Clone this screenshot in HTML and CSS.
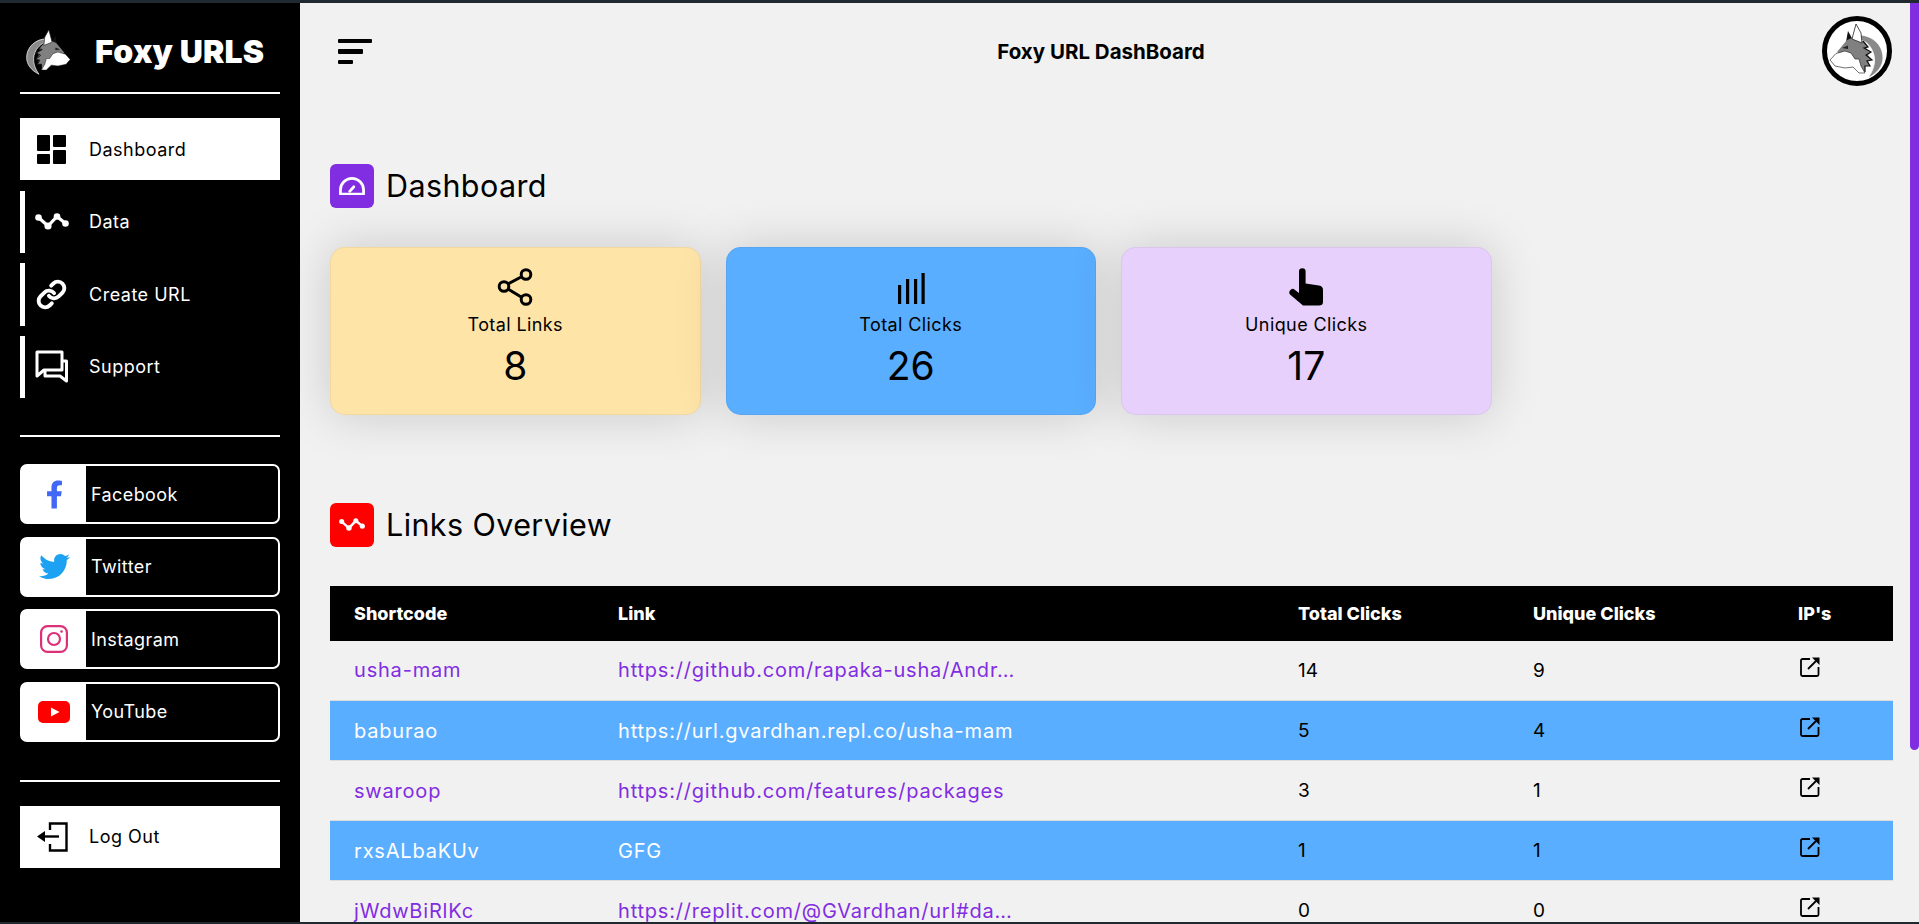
FILE: index.html
```html
<!DOCTYPE html>
<html lang="en">
<head>
    <meta charset="UTF-8">
    <meta name="viewport" content="width=device-width, initial-scale=1.0">
    <title>Foxy URL DashBoard</title>
    <link rel="stylesheet" href="styles.css">
</head>
<body>
    <!-- shared wolf head, faces left -->
    <svg class="defs">
        <symbol id="wolf" viewBox="8 7 56 56">
            <path d="M38 19C50 19 62 28 62 42C62 50 56 58 47 62C54 52 56 42 50 32C46 26 42 24 38 24Z" fill="#8a8a8a" stroke="#fff" stroke-width=".8"/>
            <path d="M27 15L32 24L25 26Z" fill="#111"/>
            <path d="M16 36L26 24L31 22L42 25L47 31L45 33L50 36L47 39L51 44L47 45L49 50L44 50L44 56L37 54L30 42L20 38Z" fill="#808080"/>
            <path d="M42 25L47 31L43 32L50 36L45 39L51 44L46 45L49 50L44 50L44 56" fill="none" stroke="#111" stroke-width="1.200"/>
            <path d="M35 8L31 23L41 27L40 17Z" fill="#fff" stroke="#222" stroke-width=".8"/>
            <path d="M9 44L15 37.500L24 35L30 37L34 43L38 43L40 50L44 57L38 57L32 51L24 52L14 50Z" fill="#fff" stroke="#111" stroke-width=".6"/>
            <path d="M21 32L27 29.500L27 33Z" fill="#222"/>
        </symbol>
        <symbol id="zigzag" viewBox="0 0 34 18">
            <path d="M3.500 4.500L13 13L22 3.500L30.500 10.500" fill="none" stroke="currentColor" stroke-width="3.200"/>
            <g fill="currentColor">
                <circle cx="3.500" cy="4.500" r="3.300"/><circle cx="13" cy="13" r="3.600"/><circle cx="22" cy="3.500" r="3.300"/><circle cx="30.500" cy="10.500" r="3.300"/>
            </g>
        </symbol>
        <symbol id="open" viewBox="0 0 20 20">
            <path d="M10 2H2.500A1.500 1.500 0 0 0 1 3.500V17.500A1.500 1.500 0 0 0 2.500 19H17A1.500 1.500 0 0 0 18.500 17.500V10" fill="none" stroke="currentColor" stroke-width="1.800"/>
            <path d="M8 12L16 4" fill="none" stroke="currentColor" stroke-width="1.800"/>
            <path d="M12 0.500H19.500V8Z" fill="currentColor"/>
        </symbol>
    </svg>

    <div class="window-edge"></div>
    <div class="app">
        <aside class="sidebar">
            <div class="brand">
                <svg class="brand-logo"><use href="#wolf"/></svg>
                <span class="brand-name">Foxy URLS</span>
            </div>
            <hr class="rule">

            <nav class="nav">
                <a class="nav-item active">
                    <span class="nav-icon">
                        <svg class="ico-dash" viewBox="0 0 29 29" fill="currentColor"><rect width="13" height="16" rx="1"/><rect y="19" width="13" height="10" rx="1"/><rect x="16" width="13" height="12" rx="1"/><rect x="16" y="15" width="13" height="14" rx="1"/></svg>
                    </span>
                    Dashboard
                </a>
                <a class="nav-item">
                    <span class="nav-icon"><svg class="ico-data"><use href="#zigzag"/></svg></span>
                    Data
                </a>
                <a class="nav-item">
                    <span class="nav-icon">
                        <svg class="ico-link" viewBox="0 0 24 24" fill="none" stroke="currentColor" stroke-width="3" stroke-linecap="round"><path d="M10 13a5 5 0 0 0 7.540.540l3-3a5 5 0 0 0-7.070-7.070l-1.720 1.710"/><path d="M14 11a5 5 0 0 0-7.540-.540l-3 3a5 5 0 0 0 7.070 7.070l1.710-1.710"/></svg>
                    </span>
                    Create URL
                </a>
                <a class="nav-item">
                    <span class="nav-icon">
                        <svg class="ico-chat" viewBox="0 0 33 33" fill="none" stroke="currentColor" stroke-width="3" stroke-linejoin="round"><path d="M2 2H27V20H9L2 26Z"/><path d="M27 11H31.500V31L25 26H10V20"/></svg>
                    </span>
                    Support
                </a>
            </nav>
            <hr class="rule rule-social">

            <div class="socials">
                <a class="social">
                    <span class="social-icon"><svg class="ico-fb" viewBox="22 0 276 512"><path fill="#4267f5" d="M279.140 288l14.220-92.660h-88.910v-60.130c0-25.350 12.420-50.060 52.240-50.060h40.420V6.260S260.430 0 225.360 0c-73.220 0-121.080 44.380-121.080 124.720v70.620H22.890V288h81.390v224h100.170V288z"/></svg></span>
                    Facebook
                </a>
                <a class="social">
                    <span class="social-icon"><svg class="ico-tw" viewBox="0 48 512 416"><path fill="#1da1f2" d="M459.370 151.716c.325 4.548.325 9.097.325 13.645 0 138.720-105.583 298.558-298.558 298.558-59.452 0-114.680-17.219-161.137-47.106 8.447.974 16.568 1.299 25.340 1.299 49.055 0 94.213-16.568 130.274-44.832-46.132-.975-84.792-31.188-98.112-72.772 6.498.974 12.995 1.624 19.818 1.624 9.421 0 18.843-1.300 27.614-3.573-48.081-9.747-84.143-51.980-84.143-102.985v-1.299c13.969 7.797 30.214 12.670 47.431 13.319-28.264-18.843-46.781-51.005-46.781-87.391 0-19.492 5.197-37.360 14.294-52.954 51.655 63.675 129.300 105.258 216.365 109.807-1.624-7.797-2.599-15.918-2.599-24.040 0-57.828 46.782-104.934 104.934-104.934 30.213 0 57.502 12.670 76.670 33.137 23.715-4.548 46.456-13.320 66.599-25.340-7.798 24.366-24.366 44.833-46.132 57.827 21.117-2.273 41.584-8.122 60.426-16.243-14.292 20.791-32.161 39.308-52.628 54.253z"/></svg></span>
                    Twitter
                </a>
                <a class="social">
                    <span class="social-icon"><svg class="ico-ig" viewBox="0 0 28 28" fill="none" stroke="#dc3078" stroke-width="2.200"><rect x="1.100" y="1.100" width="25.800" height="25.800" rx="6.500"/><circle cx="14" cy="14" r="6"/><circle cx="21.500" cy="6.500" r="1.300" fill="#dc3078" stroke="none"/></svg></span>
                    Instagram
                </a>
                <a class="social">
                    <span class="social-icon"><svg class="ico-yt" viewBox="0 0 32 22"><rect width="32" height="22" rx="5" fill="#f00"/><path d="M13 6.500L21.500 11L13 15.500Z" fill="#fff"/></svg></span>
                    YouTube
                </a>
            </div>
            <hr class="rule rule-logout">

            <a class="nav-item active">
                <span class="nav-icon">
                    <svg class="ico-logout" viewBox="0 0 32 30" fill="none" stroke="currentColor" stroke-width="2.400"><path d="M14 8V1.500H30.500V28.500H14V22"/><path d="M8 14.500H23"/><path d="M1 14.500L9 9V20Z" fill="currentColor" stroke="none"/></svg>
                </span>
                Log Out
            </a>
        </aside>

        <main class="main">
            <header class="topbar">
                <div class="menu-toggle">
                    <span class="bar bar-long"></span>
                    <span class="bar bar-mid"></span>
                    <span class="bar bar-short"></span>
                </div>
                <div class="topbar-title">Foxy URL DashBoard</div>
                <div class="avatar"><svg class="avatar-wolf"><use href="#wolf"/></svg></div>
            </header>

            <h2 class="section-title title-first">
                <span class="title-icon purple">
                    <svg class="ico-gauge" viewBox="0 0 28 20" fill="none" stroke="#fff" stroke-width="3"><path d="M1.500 18.500V14A12.500 12.500 0 0 1 26.500 14V18.500Z" stroke-linejoin="round"/><path d="M11.500 15.500L16 10.500" stroke-linecap="round"/></svg>
                </span>
                <span class="title-text">Dashboard</span>
            </h2>

            <div class="cards">
                <div class="card yellow">
                    <svg class="card-icon" viewBox="0 0 36 38" fill="none" stroke="#000" stroke-width="3"><circle cx="7" cy="18.500" r="4.800"/><circle cx="29" cy="6.500" r="4.800"/><circle cx="29" cy="31.500" r="4.800"/><path d="M11 16L25 8.500M11 21L25 29.500"/></svg>
                    <div class="card-label">Total Links</div>
                    <div class="card-value">8</div>
                </div>
                <div class="card blue">
                    <svg class="card-icon" viewBox="0 0 36 38" fill="#000"><rect x="5" y="17" width="3.200" height="19"/><rect x="13" y="11" width="3.200" height="25"/><rect x="21" y="11" width="3.200" height="25"/><rect x="28.500" y="5" width="3.200" height="31"/></svg>
                    <div class="card-label">Total Clicks</div>
                    <div class="card-value">26</div>
                </div>
                <div class="card lilac">
                    <svg class="card-icon" viewBox="0 0 36 38" fill="#000"><path d="M11 3.500a3.300 3.300 0 0 1 6.600 0V15.500L31 17.500Q35 18.200 35 22V34Q35 37.500 31 37.500H15L2 26.500Q0 24 3 21.500Q5 20 7 22L11 25Z"/></svg>
                    <div class="card-label">Unique Clicks</div>
                    <div class="card-value">17</div>
                </div>
            </div>

            <h2 class="section-title title-second">
                <span class="title-icon red"><svg class="ico-pulse"><use href="#zigzag"/></svg></span>
                <span class="title-text">Links Overview</span>
            </h2>

            <table class="links">
                <colgroup>
                    <col class="col-code"><col class="col-link"><col class="col-total"><col class="col-unique"><col class="col-ip">
                </colgroup>
                <thead>
                    <tr><th>Shortcode</th><th>Link</th><th>Total Clicks</th><th>Unique Clicks</th><th>IP's</th></tr>
                </thead>
                <tbody>
                    <tr>
                        <td><a>usha-mam</a></td>
                        <td><a>https://github.com/rapaka-usha/Andr…</a></td>
                        <td>14</td><td>9</td>
                        <td><svg class="ico-open"><use href="#open"/></svg></td>
                    </tr>
                    <tr>
                        <td><a>baburao</a></td>
                        <td><a>https://url.gvardhan.repl.co/usha-mam</a></td>
                        <td>5</td><td>4</td>
                        <td><svg class="ico-open"><use href="#open"/></svg></td>
                    </tr>
                    <tr>
                        <td><a>swaroop</a></td>
                        <td><a>https://github.com/features/packages</a></td>
                        <td>3</td><td>1</td>
                        <td><svg class="ico-open"><use href="#open"/></svg></td>
                    </tr>
                    <tr>
                        <td><a>rxsALbaKUv</a></td>
                        <td><a>GFG</a></td>
                        <td>1</td><td>1</td>
                        <td><svg class="ico-open"><use href="#open"/></svg></td>
                    </tr>
                    <tr>
                        <td><a>jWdwBiRlKc</a></td>
                        <td><a>https://replit.com/@GVardhan/url#da…</a></td>
                        <td>0</td><td>0</td>
                        <td><svg class="ico-open"><use href="#open"/></svg></td>
                    </tr>
                </tbody>
            </table>
        </main>

        <div class="scrollbar"><div class="scroll-thumb"></div></div>
    </div>
    <div class="window-edge edge-bottom"></div>
</body>
</html>
```

FILE: styles.css
```css
* {
    box-sizing: border-box;
}
body {
    font-family: Inter, "Open Sans", sans-serif;
    display: flex;
    flex-direction: column;
    height: 100vh;
    margin: 0;
    overflow: hidden;
    background-color: #f1f1f1;
    color: #000;
}
.defs {
    display: none;
}
.window-edge {
    height: 3px;
    flex-shrink: 0;
    background-color: #202830;
}
.edge-bottom {
    height: 2px;
}
.app {
    display: flex;
    flex: 1;
    min-height: 0;
}

/* sidebar */
.sidebar {
    width: 300px;
    flex-shrink: 0;
    padding: 0 20px;
    background-color: #000;
    color: #fff;
}
.brand {
    display: flex;
    align-items: center;
    height: 89px;
    padding: 8px 0 0 5px;
}
.brand-logo {
    width: 46px;
    height: 46px;
    transform: scaleX(-1);
}
.brand-name {
    margin-left: 24px;
    font-size: 32px;
    font-weight: 900;
    letter-spacing: 0.2px;
    white-space: nowrap;
}
.rule {
    height: 2px;
    margin: 0;
    border: none;
    background-color: #fff;
}
.rule-social {
    margin-top: 37px;
}
.rule-logout {
    margin-top: 38px;
    margin-bottom: 24px;
}
.nav {
    display: flex;
    flex-direction: column;
    gap: 10px;
    margin-top: 24px;
}
.nav-item {
    display: flex;
    align-items: center;
    height: 62.5px;
    border-left: 5px solid #fff;
    font-size: 18px;
    letter-spacing: 0.5px;
}
.nav-item.active {
    height: 62px;
    background-color: #fff;
    color: #000;
}
.nav-item.active + .nav-item {
    margin-top: 0.5px;
}
.nav-icon {
    display: flex;
    justify-content: center;
    width: 53px;
    margin-right: 11px;
}
.ico-dash {
    width: 29px;
    height: 29px;
}
.ico-data {
    width: 34px;
    height: 18px;
}
.ico-link {
    width: 31px;
    height: 31px;
}
.ico-chat {
    width: 33px;
    height: 33px;
}
.ico-logout {
    width: 32px;
    height: 30px;
}
.socials {
    display: flex;
    flex-direction: column;
    gap: 12.67px;
    margin-top: 27px;
}
.social {
    display: flex;
    align-items: center;
    height: 60px;
    border: 2px solid #fff;
    border-radius: 7px;
    font-size: 18px;
    letter-spacing: 0.4px;
}
.social-icon {
    display: flex;
    align-items: center;
    justify-content: center;
    align-self: stretch;
    width: 64px;
    margin-right: 5px;
    background-color: #fff;
}
.ico-fb {
    width: 15px;
    height: 29px;
}
.ico-tw {
    width: 31px;
    height: 25px;
}
.ico-ig {
    width: 28px;
    height: 28px;
}
.ico-yt {
    width: 32px;
    height: 22px;
}

/* main area */
.main {
    flex: 1;
    min-width: 0;
    padding: 0 17px 0 30px;
    overflow: hidden;
}
.topbar {
    display: flex;
    justify-content: space-between;
    align-items: center;
    height: 97px;
    padding: 0 1px 0 8px;
}
.menu-toggle {
    display: flex;
    flex-direction: column;
    gap: 6px;
    width: 34px;
}
.bar {
    height: 4.5px;
    border-radius: 1px;
    background-color: #000;
}
.bar-long {
    width: 34px;
}
.bar-mid {
    width: 25px;
}
.bar-short {
    width: 15px;
}
.topbar-title {
    margin-left: 8px;
    font-size: 20.5px;
    font-weight: 700;
}
.avatar {
    display: flex;
    align-items: center;
    justify-content: center;
    width: 70px;
    height: 70px;
    margin-top: -2px;
    border: 5.5px solid #000;
    border-radius: 50%;
    background-color: #fff;
}
.avatar-wolf {
    width: 56px;
    height: 56px;
}
.section-title {
    display: flex;
    align-items: center;
    gap: 12px;
    height: 44px;
    margin: 0;
    font-size: 30.5px;
    font-weight: 400;
    letter-spacing: 0.4px;
}
.title-text {
    margin-bottom: 2px;
}
.title-first {
    margin-top: 64px;
}
.title-second {
    margin-top: 88px;
}
.title-icon {
    display: flex;
    align-items: center;
    justify-content: center;
    width: 44px;
    height: 44px;
    border-radius: 6px;
}
.purple {
    background-color: #812de2;
}
.red {
    background-color: #f00;
    color: #fff;
}
.ico-gauge {
    width: 26px;
    height: 18.5px;
}
.ico-pulse {
    width: 26px;
    height: 14px;
}

/* stat cards */
.cards {
    display: flex;
    gap: 25px;
    margin-top: 39px;
}
.card {
    display: flex;
    flex-direction: column;
    align-items: center;
    width: 370.5px;
    height: 168px;
    padding-top: 20px;
    border: 1px solid rgba(0, 0, 0, 0.05);
    border-radius: 15px;
    box-shadow: 0 0 50px rgba(0, 0, 0, 0.17);
}
.yellow {
    background-color: #ffe4a8;
}
.blue {
    background-color: #5aaeff;
}
.lilac {
    background-color: #e7d0fb;
}
.card-icon {
    width: 36px;
    height: 38px;
}
.card-label {
    margin-top: 8px;
    font-size: 18px;
    letter-spacing: 0.4px;
}
.card-value {
    margin-top: 7px;
    font-size: 39px;
}

/* links table */
.links {
    width: 100%;
    margin-top: 39px;
    border-collapse: collapse;
    table-layout: fixed;
    font-size: 19px;
}
.col-code {
    width: 264px;
}
.col-link {
    width: 680px;
}
.col-total {
    width: 235px;
}
.col-unique {
    width: 265px;
}
.links th {
    height: 54.5px;
    padding: 0 24px;
    background-color: #000;
    color: #fff;
    font-size: 18px;
    font-weight: 800;
    text-align: left;
}
.links td {
    height: 60px;
    padding: 0 24px;
    border-bottom: 1px solid #dcdcdc;
    white-space: nowrap;
}
.links a {
    color: #812de2;
    font-size: 20px;
    letter-spacing: 0.8px;
}
.links tbody tr:nth-child(even) {
    background-color: #5aaeff;
}
.links tbody tr:nth-child(even) a {
    color: #fff;
}
.ico-open {
    display: block;
    width: 20px;
    height: 20px;
    margin: -7px 0 0 2px;
}

/* page scroll indicator */
.scrollbar {
    width: 9px;
    flex-shrink: 0;
}
.scroll-thumb {
    height: 747px;
    border-radius: 0 0 5px 5px;
    background-color: #812de2;
}
```
